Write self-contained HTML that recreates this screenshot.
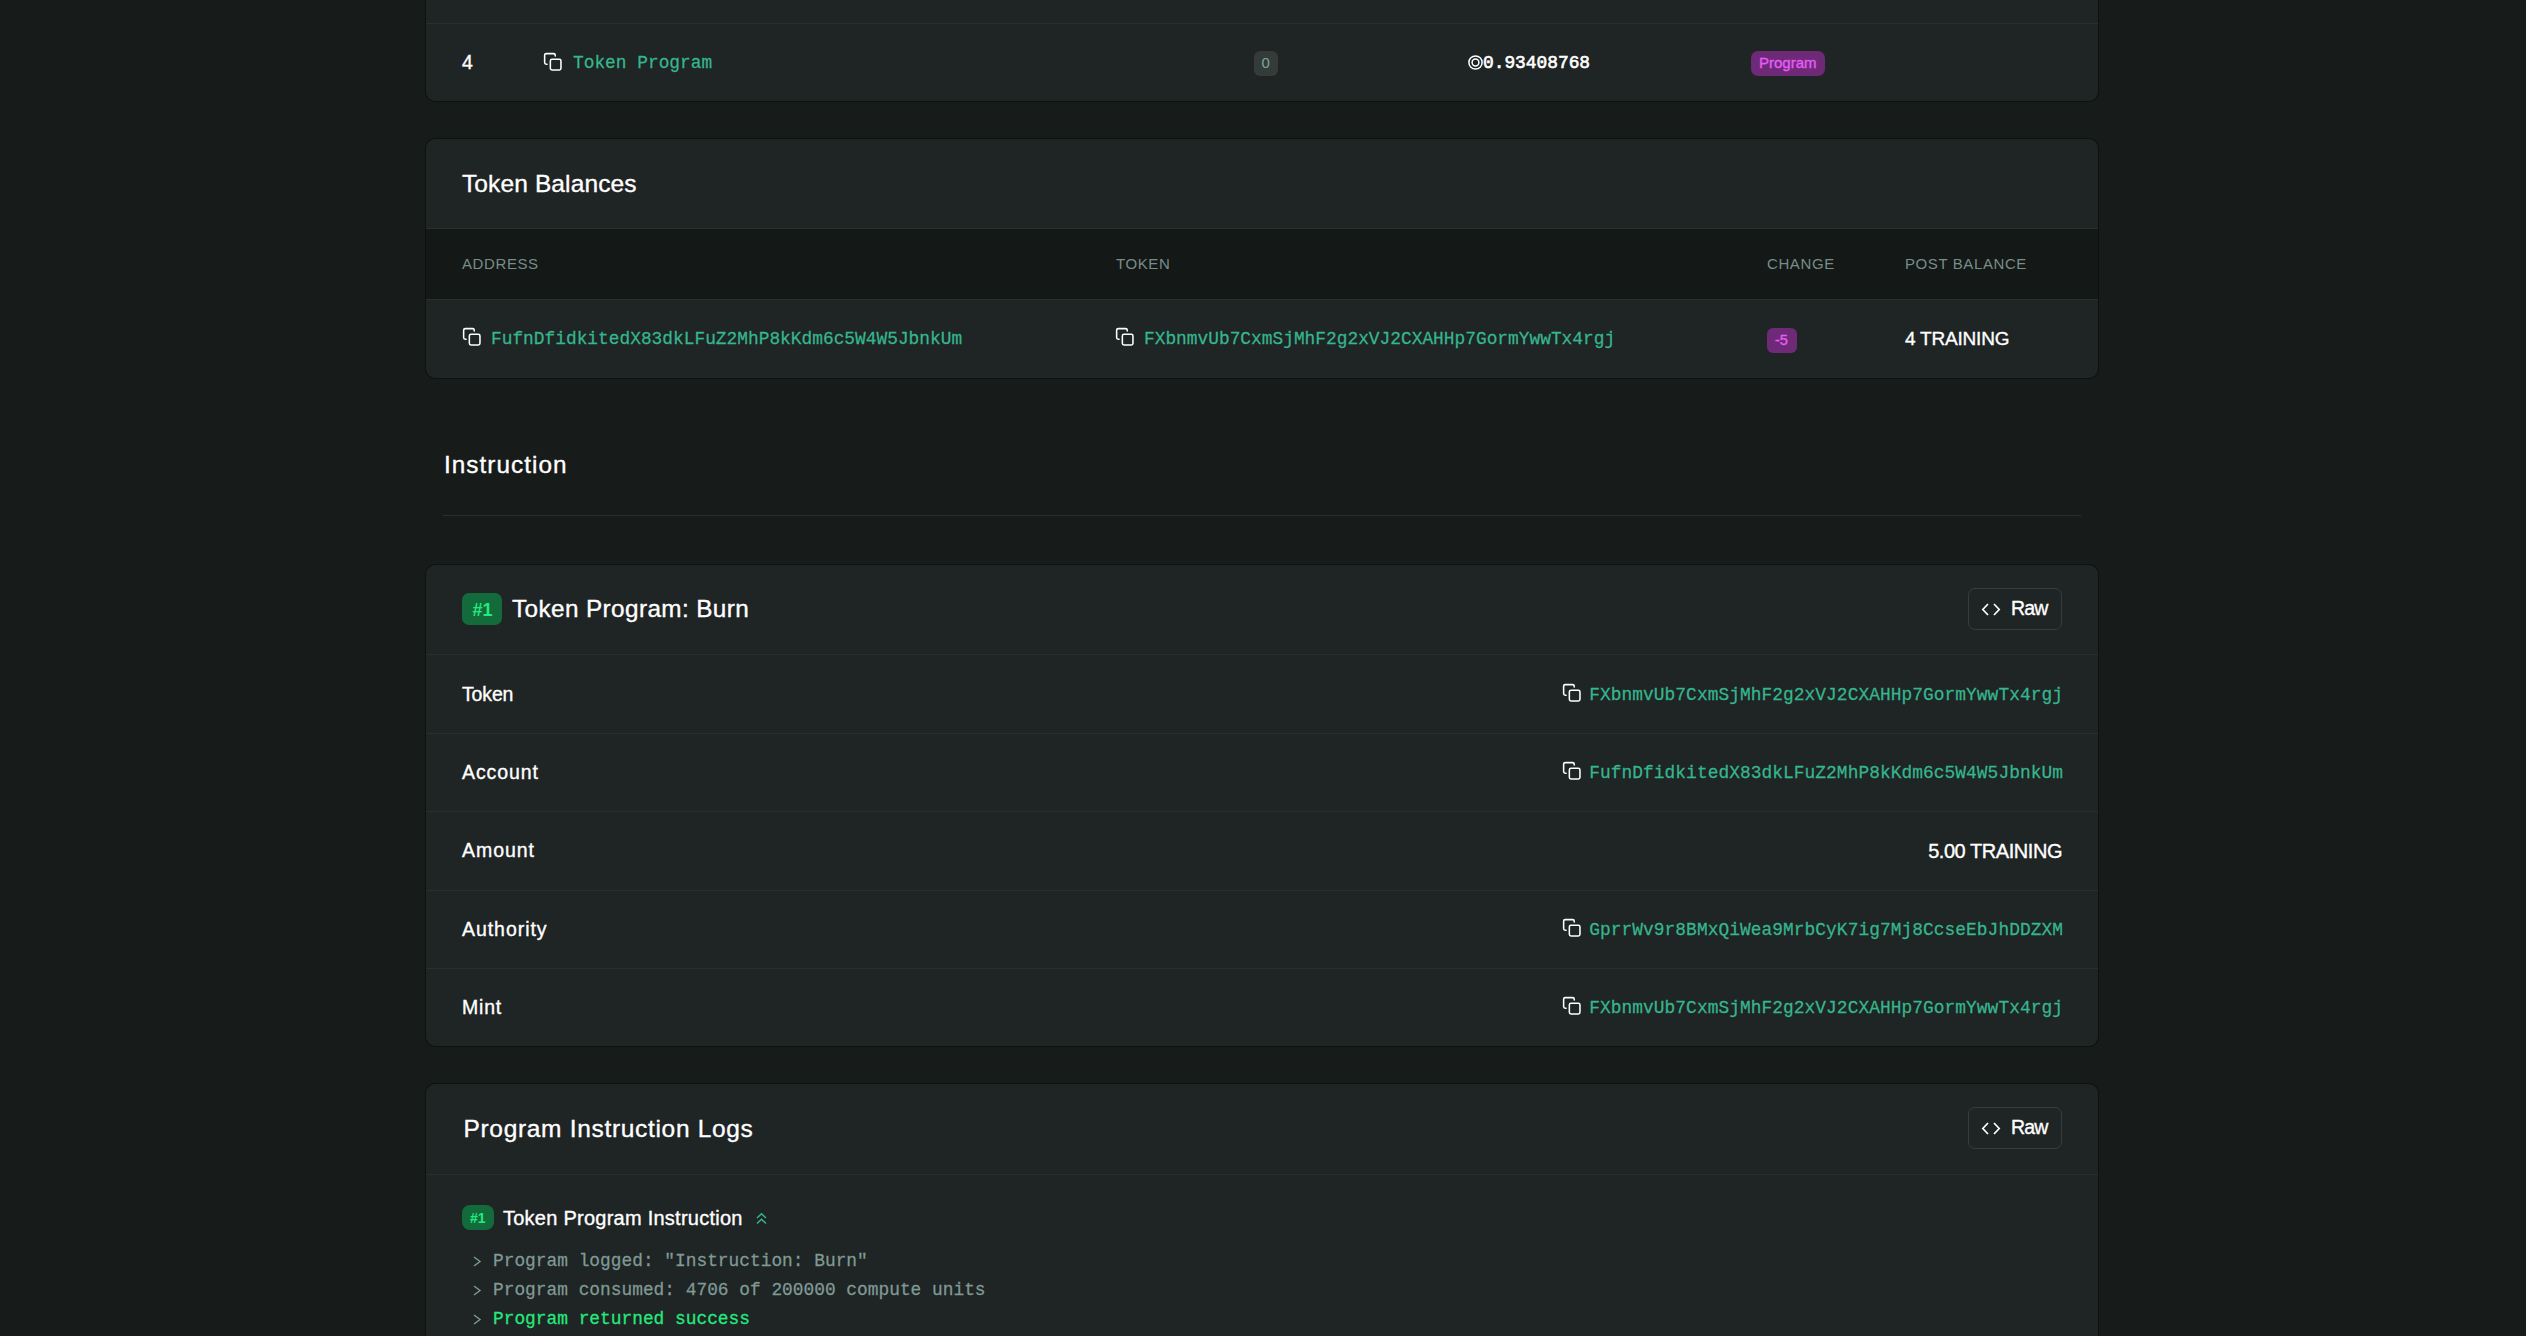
<!DOCTYPE html>
<html><head><meta charset="utf-8"><title>Transaction</title>
<style>
html,body{margin:0;padding:0;}
body{width:2526px;height:1336px;overflow:hidden;background:#171b19;position:relative;font-family:'Liberation Sans', sans-serif;}
.t{position:absolute;line-height:1;white-space:pre;}
.r{position:absolute;}
.card{position:absolute;background:#1f2424;border-radius:9px;box-shadow:0 0 0 1px #0f1110;}
</style></head><body>
<div class="card" style="left:426px;top:-200px;width:1672px;height:301px"></div>
<div class="r" style="left:426px;top:23px;width:1672px;height:1px;background:#2a2f2e;"></div>
<div class="t" style="left:462px;top:52.99px;font-family:'Liberation Sans', sans-serif;font-size:19.5px;color:#ffffff;font-weight:400;-webkit-text-stroke:0.35px currentColor;">4</div>
<svg class="r" style="left:543.18px;top:51.68px" width="19.6" height="19.6" viewBox="0 0 24 24" fill="none" stroke="#ffffff" stroke-width="1.9" stroke-linecap="round" stroke-linejoin="round"><rect x="9" y="9" width="13" height="13" rx="2" ry="2"/><path d="M5 15H4a2 2 0 0 1-2-2V4a2 2 0 0 1 2-2h9a2 2 0 0 1 2 2v1"/></svg>
<div class="t" style="left:573px;top:55.33px;font-family:'Liberation Mono', monospace;font-size:17.85px;color:#36b68e;font-weight:400;transform:scale(1.0,1.06);transform-origin:0 13.67px;-webkit-text-stroke:0.25px currentColor;">Token Program</div>
<div class="r" style="left:1254px;top:51px;width:24px;height:25px;background:#343b39;border-radius:6px;"></div>
<div class="t" style="left:1261.5px;top:55.30px;font-family:'Liberation Sans', sans-serif;font-size:15px;color:#7fa59f;font-weight:400;">0</div>
<svg class="r" style="left:1467.5px;top:55px" width="15" height="15" viewBox="0 0 15 15" fill="none" stroke="#fff" stroke-width="1.5"><circle cx="7.5" cy="7.5" r="6.6"/><circle cx="7.5" cy="7.5" r="3.4"/></svg>
<div class="t" style="left:1483px;top:54.83px;font-family:'Liberation Mono', monospace;font-size:17.85px;color:#ffffff;font-weight:400;transform:scale(1.0,1.06);transform-origin:0 13.67px;-webkit-text-stroke:0.6px currentColor;">0.93408768</div>
<div class="r" style="left:1751px;top:51px;width:74px;height:25px;background:#6e2a77;border-radius:7px;"></div>
<div class="t" style="left:1759px;top:54.80px;font-family:'Liberation Sans', sans-serif;font-size:15px;color:#e85cf7;font-weight:400;-webkit-text-stroke:0.35px currentColor;">Program</div>
<div class="card" style="left:426px;top:139px;width:1672px;height:239px"></div>
<div class="t" style="left:462px;top:171.66px;font-family:'Liberation Sans', sans-serif;font-size:24.5px;color:#ffffff;font-weight:400;letter-spacing:0.12px;-webkit-text-stroke:0.35px currentColor;">Token Balances</div>
<div class="r" style="left:426px;top:228px;width:1672px;height:71px;background:#141817;"></div>
<div class="r" style="left:426px;top:228px;width:1672px;height:1px;background:#2a2f2e;"></div>
<div class="r" style="left:426px;top:299px;width:1672px;height:1px;background:#2a2f2e;"></div>
<div class="t" style="left:462px;top:255.80px;font-family:'Liberation Sans', sans-serif;font-size:15px;color:#788d89;font-weight:400;letter-spacing:0.6px;">ADDRESS</div>
<div class="t" style="left:1116px;top:255.80px;font-family:'Liberation Sans', sans-serif;font-size:15px;color:#788d89;font-weight:400;letter-spacing:0.6px;">TOKEN</div>
<div class="t" style="left:1767px;top:255.80px;font-family:'Liberation Sans', sans-serif;font-size:15px;color:#788d89;font-weight:400;letter-spacing:0.6px;">CHANGE</div>
<div class="t" style="left:1905px;top:255.80px;font-family:'Liberation Sans', sans-serif;font-size:15px;color:#788d89;font-weight:400;letter-spacing:0.6px;">POST BALANCE</div>
<svg class="r" style="left:462.18px;top:327.18px" width="19.6" height="19.6" viewBox="0 0 24 24" fill="none" stroke="#ffffff" stroke-width="1.9" stroke-linecap="round" stroke-linejoin="round"><rect x="9" y="9" width="13" height="13" rx="2" ry="2"/><path d="M5 15H4a2 2 0 0 1-2-2V4a2 2 0 0 1 2-2h9a2 2 0 0 1 2 2v1"/></svg>
<div class="t" style="left:491px;top:331.33px;font-family:'Liberation Mono', monospace;font-size:17.85px;color:#36b68e;font-weight:400;transform:scale(1.0,1.06);transform-origin:0 13.67px;-webkit-text-stroke:0.25px currentColor;">FufnDfidkitedX83dkLFuZ2MhP8kKdm6c5W4W5JbnkUm</div>
<svg class="r" style="left:1115.18px;top:327.18px" width="19.6" height="19.6" viewBox="0 0 24 24" fill="none" stroke="#ffffff" stroke-width="1.9" stroke-linecap="round" stroke-linejoin="round"><rect x="9" y="9" width="13" height="13" rx="2" ry="2"/><path d="M5 15H4a2 2 0 0 1-2-2V4a2 2 0 0 1 2-2h9a2 2 0 0 1 2 2v1"/></svg>
<div class="t" style="left:1144px;top:331.33px;font-family:'Liberation Mono', monospace;font-size:17.85px;color:#36b68e;font-weight:400;transform:scale(1.0,1.06);transform-origin:0 13.67px;-webkit-text-stroke:0.25px currentColor;">FXbnmvUb7CxmSjMhF2g2xVJ2CXAHHp7GormYwwTx4rgj</div>
<div class="r" style="left:1767px;top:328px;width:30px;height:25px;background:#6e2a77;border-radius:6px;"></div>
<div class="t" style="left:1775px;top:333.22px;font-family:'Liberation Sans', sans-serif;font-size:14.5px;color:#e85cf7;font-weight:400;-webkit-text-stroke:0.35px currentColor;">-5</div>
<div class="t" style="left:1905px;top:328.91px;font-family:'Liberation Sans', sans-serif;font-size:19px;color:#ffffff;font-weight:400;letter-spacing:-0.2px;-webkit-text-stroke:0.35px currentColor;">4 TRAINING</div>
<div class="t" style="left:444px;top:453.43px;font-family:'Liberation Sans', sans-serif;font-size:24.3px;color:#ffffff;font-weight:400;letter-spacing:1.05px;-webkit-text-stroke:0.35px currentColor;">Instruction</div>
<div class="r" style="left:443px;top:515px;width:1638px;height:1px;background:#2a2f2e;"></div>
<div class="card" style="left:426px;top:565px;width:1672px;height:481px"></div>
<div class="r" style="left:462px;top:593px;width:40px;height:32px;background:#136b3b;border-radius:7px;"></div>
<div class="t" style="left:472.5px;top:601.26px;font-family:'Liberation Sans', sans-serif;font-size:18px;color:#26e97e;font-weight:700;">#1</div>
<div class="t" style="left:512px;top:597.43px;font-family:'Liberation Sans', sans-serif;font-size:24.3px;color:#ffffff;font-weight:400;letter-spacing:0.4px;-webkit-text-stroke:0.35px currentColor;">Token Program: Burn</div>
<div class="r" style="left:1968px;top:588px;width:94px;height:42px;box-sizing:border-box;border:1px solid #373d3c;border-radius:7px;"></div>
<svg class="r" style="left:1981px;top:602px" width="20" height="15" viewBox="0 0 20 15" fill="none" stroke="#fff" stroke-width="1.7"><path d="M7 2L1.8 7.5L7 13M13 2L18.2 7.5L13 13"/></svg>
<div class="t" style="left:2011px;top:598.99px;font-family:'Liberation Sans', sans-serif;font-size:19.5px;color:#ffffff;font-weight:400;letter-spacing:-0.8px;-webkit-text-stroke:0.35px currentColor;">Raw</div>
<div class="r" style="left:426px;top:654px;width:1672px;height:1px;background:#2a2f2e;"></div>
<div class="t" style="left:462px;top:685.09px;font-family:'Liberation Sans', sans-serif;font-size:19.5px;color:#ffffff;font-weight:400;letter-spacing:-0.15px;-webkit-text-stroke:0.35px currentColor;">Token</div>
<svg class="r" style="left:1561.68px;top:683.18px" width="19.6" height="19.6" viewBox="0 0 24 24" fill="none" stroke="#ffffff" stroke-width="1.9" stroke-linecap="round" stroke-linejoin="round"><rect x="9" y="9" width="13" height="13" rx="2" ry="2"/><path d="M5 15H4a2 2 0 0 1-2-2V4a2 2 0 0 1 2-2h9a2 2 0 0 1 2 2v1"/></svg>
<div class="t" style="right:463px;top:687.33px;font-family:'Liberation Mono', monospace;font-size:17.85px;color:#36b68e;font-weight:400;letter-spacing:0.06px;transform:scale(1.0,1.06);transform-origin:100% 13.67px;-webkit-text-stroke:0.25px currentColor;">FXbnmvUb7CxmSjMhF2g2xVJ2CXAHHp7GormYwwTx4rgj</div>
<div class="t" style="left:462px;top:763.09px;font-family:'Liberation Sans', sans-serif;font-size:19.5px;color:#ffffff;font-weight:400;letter-spacing:0.9px;-webkit-text-stroke:0.35px currentColor;">Account</div>
<svg class="r" style="left:1561.68px;top:761.18px" width="19.6" height="19.6" viewBox="0 0 24 24" fill="none" stroke="#ffffff" stroke-width="1.9" stroke-linecap="round" stroke-linejoin="round"><rect x="9" y="9" width="13" height="13" rx="2" ry="2"/><path d="M5 15H4a2 2 0 0 1-2-2V4a2 2 0 0 1 2-2h9a2 2 0 0 1 2 2v1"/></svg>
<div class="t" style="right:463px;top:765.33px;font-family:'Liberation Mono', monospace;font-size:17.85px;color:#36b68e;font-weight:400;letter-spacing:0.06px;transform:scale(1.0,1.06);transform-origin:100% 13.67px;-webkit-text-stroke:0.25px currentColor;">FufnDfidkitedX83dkLFuZ2MhP8kKdm6c5W4W5JbnkUm</div>
<div class="t" style="left:462px;top:841.09px;font-family:'Liberation Sans', sans-serif;font-size:19.5px;color:#ffffff;font-weight:400;letter-spacing:0.95px;-webkit-text-stroke:0.35px currentColor;">Amount</div>
<div class="t" style="right:464px;top:840.57px;font-family:'Liberation Sans', sans-serif;font-size:20px;color:#ffffff;font-weight:400;letter-spacing:-0.45px;-webkit-text-stroke:0.35px currentColor;">5.00 TRAINING</div>
<div class="t" style="left:462px;top:919.59px;font-family:'Liberation Sans', sans-serif;font-size:19.5px;color:#ffffff;font-weight:400;letter-spacing:0.95px;-webkit-text-stroke:0.35px currentColor;">Authority</div>
<svg class="r" style="left:1561.68px;top:917.68px" width="19.6" height="19.6" viewBox="0 0 24 24" fill="none" stroke="#ffffff" stroke-width="1.9" stroke-linecap="round" stroke-linejoin="round"><rect x="9" y="9" width="13" height="13" rx="2" ry="2"/><path d="M5 15H4a2 2 0 0 1-2-2V4a2 2 0 0 1 2-2h9a2 2 0 0 1 2 2v1"/></svg>
<div class="t" style="right:463px;top:921.83px;font-family:'Liberation Mono', monospace;font-size:17.85px;color:#36b68e;font-weight:400;letter-spacing:0.06px;transform:scale(1.0,1.06);transform-origin:100% 13.67px;-webkit-text-stroke:0.25px currentColor;">GprrWv9r8BMxQiWea9MrbCyK7ig7Mj8CcseEbJhDDZXM</div>
<div class="t" style="left:462px;top:997.79px;font-family:'Liberation Sans', sans-serif;font-size:19.5px;color:#ffffff;font-weight:400;letter-spacing:0.8px;-webkit-text-stroke:0.35px currentColor;">Mint</div>
<svg class="r" style="left:1561.68px;top:995.88px" width="19.6" height="19.6" viewBox="0 0 24 24" fill="none" stroke="#ffffff" stroke-width="1.9" stroke-linecap="round" stroke-linejoin="round"><rect x="9" y="9" width="13" height="13" rx="2" ry="2"/><path d="M5 15H4a2 2 0 0 1-2-2V4a2 2 0 0 1 2-2h9a2 2 0 0 1 2 2v1"/></svg>
<div class="t" style="right:463px;top:1000.03px;font-family:'Liberation Mono', monospace;font-size:17.85px;color:#36b68e;font-weight:400;letter-spacing:0.06px;transform:scale(1.0,1.06);transform-origin:100% 13.67px;-webkit-text-stroke:0.25px currentColor;">FXbnmvUb7CxmSjMhF2g2xVJ2CXAHHp7GormYwwTx4rgj</div>
<div class="r" style="left:426px;top:733px;width:1672px;height:1px;background:#2a2f2e;"></div>
<div class="r" style="left:426px;top:811px;width:1672px;height:1px;background:#2a2f2e;"></div>
<div class="r" style="left:426px;top:890px;width:1672px;height:1px;background:#2a2f2e;"></div>
<div class="r" style="left:426px;top:968px;width:1672px;height:1px;background:#2a2f2e;"></div>
<div class="card" style="left:426px;top:1084px;width:1672px;height:400px"></div>
<div class="t" style="left:463.5px;top:1116.76px;font-family:'Liberation Sans', sans-serif;font-size:24.5px;color:#ffffff;font-weight:400;letter-spacing:0.68px;-webkit-text-stroke:0.35px currentColor;">Program Instruction Logs</div>
<div class="r" style="left:1968px;top:1107px;width:94px;height:42px;box-sizing:border-box;border:1px solid #373d3c;border-radius:7px;"></div>
<svg class="r" style="left:1981px;top:1121px" width="20" height="15" viewBox="0 0 20 15" fill="none" stroke="#fff" stroke-width="1.7"><path d="M7 2L1.8 7.5L7 13M13 2L18.2 7.5L13 13"/></svg>
<div class="t" style="left:2011px;top:1117.99px;font-family:'Liberation Sans', sans-serif;font-size:19.5px;color:#ffffff;font-weight:400;letter-spacing:-0.8px;-webkit-text-stroke:0.35px currentColor;">Raw</div>
<div class="r" style="left:426px;top:1174px;width:1672px;height:1px;background:#2a2f2e;"></div>
<div class="r" style="left:462px;top:1205px;width:32px;height:25px;background:#136b3b;border-radius:8px;"></div>
<div class="t" style="left:470px;top:1210.65px;font-family:'Liberation Sans', sans-serif;font-size:14px;color:#26e97e;font-weight:700;">#1</div>
<div class="t" style="left:503px;top:1207.57px;font-family:'Liberation Sans', sans-serif;font-size:20px;color:#ffffff;font-weight:400;letter-spacing:0.25px;-webkit-text-stroke:0.35px currentColor;">Token Program Instruction</div>
<svg class="r" style="left:755px;top:1212px" width="13" height="13" viewBox="0 0 13 13" fill="none" stroke="#36b68e" stroke-width="1.5"><path d="M2 6L6.5 1.8L11 6M2 11.5L6.5 7.3L11 11.5"/></svg>
<svg class="r" style="left:472px;top:1255px" width="10" height="13" viewBox="0 0 10 13" fill="none" stroke="#7f9a95" stroke-width="1.4"><path d="M2 2L8 6.5L2 11"/></svg>
<div class="t" style="left:493px;top:1253.33px;font-family:'Liberation Mono', monospace;font-size:17.85px;color:#7f9a95;font-weight:400;transform:scale(1.0,1.06);transform-origin:0 13.67px;-webkit-text-stroke:0.25px currentColor;">Program logged: &quot;Instruction: Burn&quot;</div>
<svg class="r" style="left:472px;top:1283.5px" width="10" height="13" viewBox="0 0 10 13" fill="none" stroke="#7f9a95" stroke-width="1.4"><path d="M2 2L8 6.5L2 11"/></svg>
<div class="t" style="left:493px;top:1281.83px;font-family:'Liberation Mono', monospace;font-size:17.85px;color:#7f9a95;font-weight:400;transform:scale(1.0,1.06);transform-origin:0 13.67px;-webkit-text-stroke:0.25px currentColor;">Program consumed: 4706 of 200000 compute units</div>
<svg class="r" style="left:472px;top:1312.7px" width="10" height="13" viewBox="0 0 10 13" fill="none" stroke="#7f9a95" stroke-width="1.4"><path d="M2 2L8 6.5L2 11"/></svg>
<div class="t" style="left:493px;top:1311.03px;font-family:'Liberation Mono', monospace;font-size:17.85px;color:#26e97e;font-weight:400;transform:scale(1.0,1.06);transform-origin:0 13.67px;-webkit-text-stroke:0.25px currentColor;">Program returned success</div>
</body></html>
